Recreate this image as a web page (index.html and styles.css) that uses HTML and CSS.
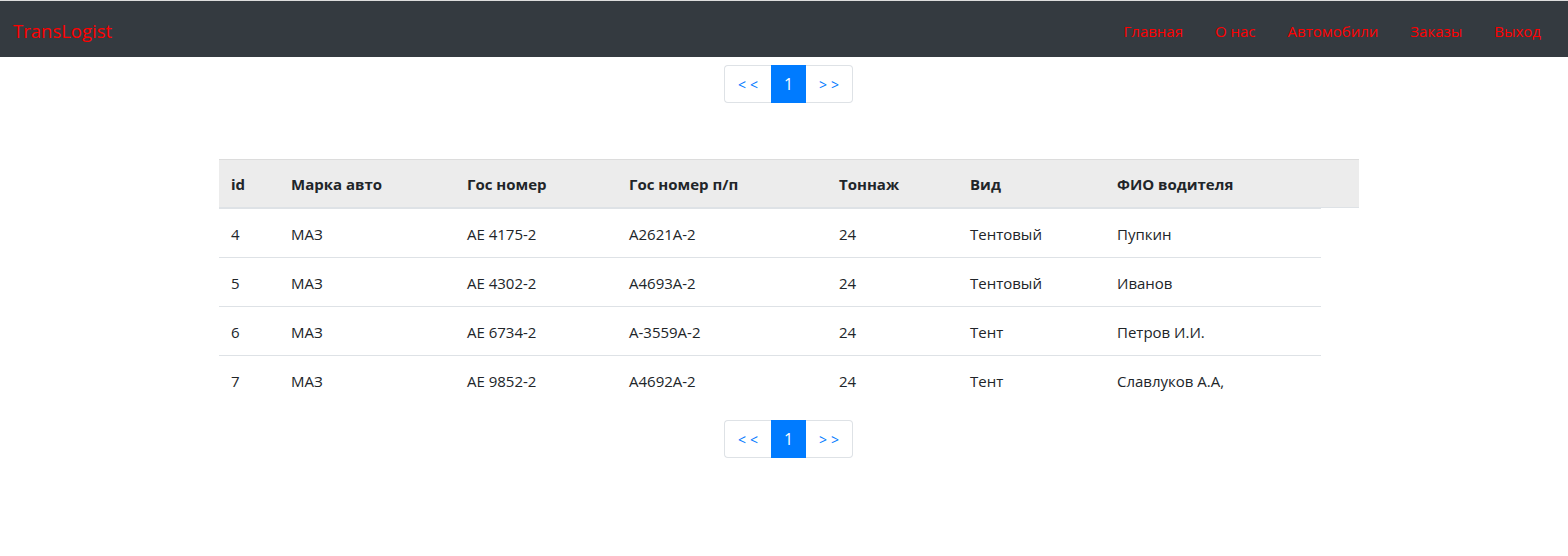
FILE: index.html
```html
<!DOCTYPE html>
<html lang="ru">
<head>
<meta charset="utf-8">
<title>TransLogist</title>
<link rel="stylesheet" href="styles.css">
</head>
<body>
<nav class="navbar">
  <a class="brand" href="#">TransLogist</a>
  <ul class="nav">
    <li><a href="#">Главная</a></li>
    <li><a href="#">О нас</a></li>
    <li><a href="#">Автомобили</a></li>
    <li><a href="#">Заказы</a></li>
    <li><a href="#">Выход</a></li>
  </ul>
</nav>
<div class="pager top">
  <a class="page first" href="#">&lt;&lt;</a>
  <span class="page active">1</span>
  <a class="page last" href="#">&gt;&gt;</a>
</div>
<div class="wrap">
  <div class="row head">
    <div class="cell">id</div>
    <div class="cell">Марка авто</div>
    <div class="cell">Гос номер</div>
    <div class="cell">Гос номер п/п</div>
    <div class="cell">Тоннаж</div>
    <div class="cell">Вид</div>
    <div class="cell">ФИО водителя</div>
  </div>
  <div class="row">
    <div class="cell">4</div><div class="cell">МАЗ</div><div class="cell">АЕ 4175-2</div><div class="cell">А2621А-2</div><div class="cell">24</div><div class="cell">Тентовый</div><div class="cell">Пупкин</div>
  </div>
  <div class="row">
    <div class="cell">5</div><div class="cell">МАЗ</div><div class="cell">АЕ 4302-2</div><div class="cell">А4693А-2</div><div class="cell">24</div><div class="cell">Тентовый</div><div class="cell">Иванов</div>
  </div>
  <div class="row">
    <div class="cell">6</div><div class="cell">МАЗ</div><div class="cell">АЕ 6734-2</div><div class="cell">А-3559А-2</div><div class="cell">24</div><div class="cell">Тент</div><div class="cell">Петров И.И.</div>
  </div>
  <div class="row">
    <div class="cell">7</div><div class="cell">МАЗ</div><div class="cell">АЕ 9852-2</div><div class="cell">А4692А-2</div><div class="cell">24</div><div class="cell">Тент</div><div class="cell">Славлуков А.А,</div>
  </div>
</div>
<div class="pager bottom">
  <a class="page first" href="#">&lt;&lt;</a>
  <span class="page active">1</span>
  <a class="page last" href="#">&gt;&gt;</a>
</div>
</body>
</html>
```
FILE: styles.css
```css
* { box-sizing: border-box; }
body {
  margin: 0;
  font-family: "Open Sans", "Noto Sans", sans-serif;
  font-size: 15px;
  color: #212529;
  background: #fff;
}
.navbar {
  height: 57px;
  background: #343a40;
  border-top: 1px solid #dcdcdc;
  display: flex;
  align-items: center;
  justify-content: space-between;
  padding: 0 16px 0 13px;
}
.brand {
  color: #ff0000;
  text-decoration: none;
  font-size: 18.5px;
  line-height: 30px;
  margin-top: 4px;
}
.nav {
  list-style: none;
  margin: 4px 0 0;
  padding: 0;
  display: flex;
}
.nav li a {
  display: block;
  color: #ff0000;
  text-decoration: none;
  font-size: 15px;
  padding: 8px 16px;
}
.nav li:last-child a { padding-right: 11px; }
.pager {
  display: flex;
  justify-content: center;
  padding-left: 9px;
}
.pager.top { margin-top: 8px; }
.pager.bottom { margin-top: 16px; }
.page {
  display: block;
  height: 38px;
  line-height: 37px;
  border: 1px solid #dee2e6;
  color: #007bff;
  text-decoration: none;
  font-size: 14px;
  letter-spacing: 4px;
  text-align: center;
}
.page.first { width: 47px; border-radius: 4px 0 0 4px; border-right: 0; padding-left: 4px; }
.page.last { width: 47px; border-radius: 0 4px 4px 0; border-left: 0; padding-left: 4px; }
.page.active {
  width: 35px;
  background: #007bff;
  border-color: #007bff;
  color: #fff;
  font-size: 16px;
  letter-spacing: 0;
  padding-left: 0;
}
.wrap {
  margin: 56px 0 0 219px;
  width: 1140px;
}
.row {
  display: grid;
  grid-template-columns: 60px 176px 162px 210px 131px 147px 216px;
  width: 1102px;
  border-top: 1px solid #dee2e6;
}
.row.head {
  width: 1140px;
  grid-template-columns: 60px 176px 162px 210px 131px 147px 254px;
  background: #ececec;
  font-weight: 700;
  border-top: 1px solid #dcdcdc;
  box-shadow: inset 0 -1px 0 #dee2e6;
}
.cell {
  padding: 12px 12px 12px;
  line-height: 24px;
  white-space: nowrap;
}
.row:not(.head) .cell { padding: 13px 12px 11px; }
```
